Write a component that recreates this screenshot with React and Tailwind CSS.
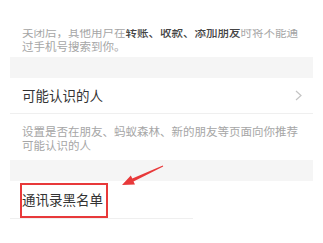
export default function App() {
  return (
    <div className="relative h-[243px] w-[323px] overflow-hidden bg-white px-[10px] font-['Noto_Sans_CJK_SC',sans-serif]">
      {/* 顶部说明文字（截图上沿被裁掉一部分） */}
      <div className="h-[29px]" />
      <div className="overflow-hidden">
        <p className="-mt-[4px] pb-[4px] pl-[12px] pr-[6px] text-[11.5px] leading-[14px] text-[#a6a6a6] whitespace-nowrap">
          关闭后，其他用户在<span className="font-medium text-[#444]">转账、收款、添加朋友</span>时将不能通
          <br />
          过手机号搜索到你。
        </p>
      </div>

      <div className="h-[21px] bg-[#f5f5f5]" />

      <div className="flex h-[35px] items-center justify-between pl-[12px] pr-[11px]">
        <span className="text-[13.5px] text-[#333]">可能认识的人</span>
        <svg width="7" height="11" viewBox="0 0 7 11" fill="none">
          <polyline points="1,1 6,5.5 1,10" stroke="#c4c4c4" strokeWidth="1.2" />
        </svg>
      </div>
      <div className="h-px bg-[#efefef]" />
      <p className="pb-[8px] pl-[12px] pr-[6px] pt-[10px] text-[11.5px] leading-[14px] text-[#a6a6a6] whitespace-nowrap">
        设置是否在朋友、蚂蚁森林、新的朋友等页面向你推荐
        <br />
        可能认识的人
      </p>

      <div className="h-[21px] bg-[#f5f5f5]" />

      <div className="flex h-[37px] items-center pl-[12px]">
        <span className="text-[13.5px] text-[#333]">通讯录黑名单</span>
      </div>
      <div className="h-px w-[183px] bg-[#efefef]" />

      {/* 标注 */}
      <div className="absolute left-[20px] top-[183px] h-[35px] w-[88px] border-2 border-[#e8393a]" />
      <svg className="absolute left-0 top-0" width="323" height="243" viewBox="0 0 323 243">
        <polygon
          points="162.8,165.5 132.3,178.6 130.8,175.5 122,185 135,184.5 133.5,181.4 163.2,166.5"
          fill="#e8393a"
        />
      </svg>
    </div>
  );
}
